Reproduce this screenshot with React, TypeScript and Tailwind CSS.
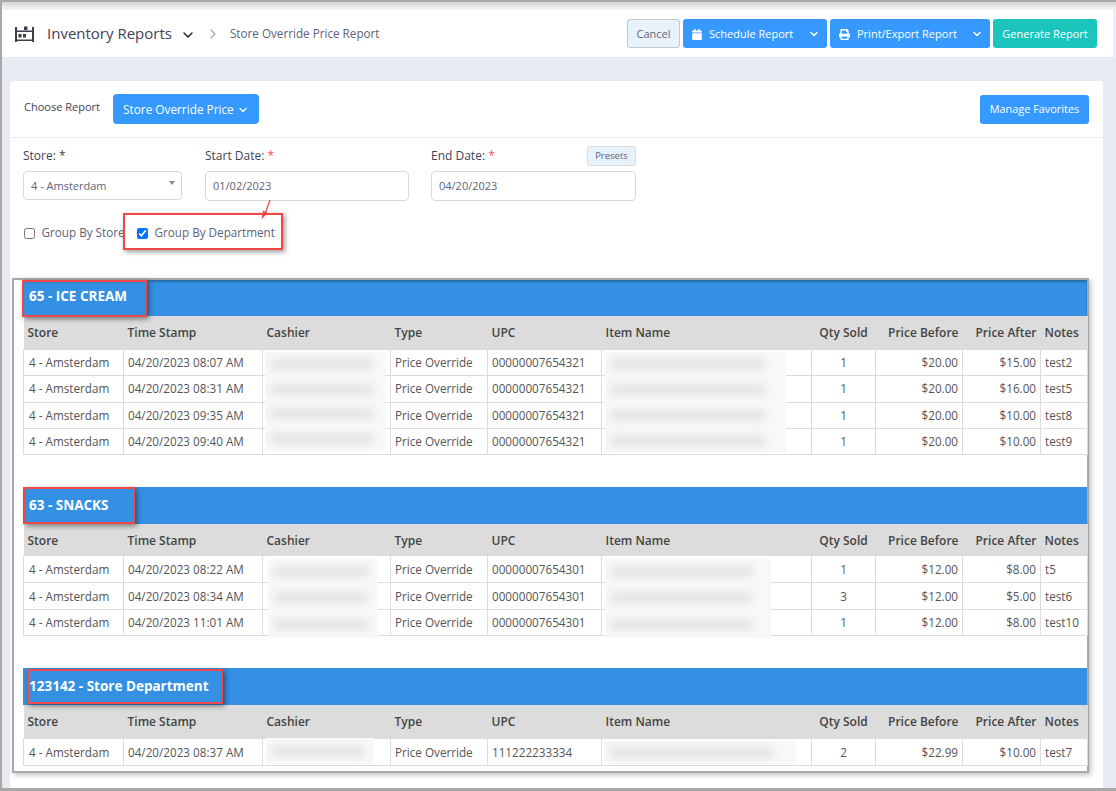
import { FaCalendar, FaPrint } from "react-icons/fa";
import { ChevronDown, ChevronRight } from "lucide-react";

type Row = {
  time: string;
  upc: string;
  qty: number;
  before: string;
  after: string;
  notes: string;
};

type Group = {
  title: string;
  rows: Row[];
  rowH: string[];
  mark: string;
  cashierPatch: string;
  itemPatch: string;
  gap: string;
  headH: string;
  headPt: string;
  blue: string;
  cellPt: string;
};

const COLS = [100, 139, 128, 97, 114, 210, 64, 87, 78, 47];

const GROUPS: Group[] = [
  {
    title: "65 - ICE CREAM",
    mark: "left-[-1px] top-0 h-[37px] w-[125px]",
    cashierPatch: "left-[242px] top-[72px] h-[99px] w-[120px]",
    itemPatch: "left-[582px] top-[72px] h-[101px] w-[181px]",
    gap: "",
    blue: "h-[36px] pb-[4px] shadow-[inset_0_2px_2px_rgba(0,0,0,0.25)]",
    headH: "h-[33px]",
    headPt: "pt-[2px]",
    cellPt: "pt-[1px]",
    rowH: ["h-[26px]", "h-[27px]", "h-[26px]", "h-[26px]"],
    rows: [
      { time: "04/20/2023 08:07 AM", upc: "00000007654321", qty: 1, before: "$20.00", after: "$15.00", notes: "test2" },
      { time: "04/20/2023 08:31 AM", upc: "00000007654321", qty: 1, before: "$20.00", after: "$16.00", notes: "test5" },
      { time: "04/20/2023 09:35 AM", upc: "00000007654321", qty: 1, before: "$20.00", after: "$10.00", notes: "test8" },
      { time: "04/20/2023 09:40 AM", upc: "00000007654321", qty: 1, before: "$20.00", after: "$10.00", notes: "test9" },
    ],
  },
  {
    title: "63 - SNACKS",
    mark: "left-[1px] top-0 h-[37px] w-[111px]",
    cashierPatch: "left-[245px] top-[72px] h-[79px] w-[110px]",
    itemPatch: "left-[582px] top-[72px] h-[79px] w-[166px]",
    gap: "mt-[32px]",
    blue: "h-[37px]",
    headH: "h-[32px]",
    headPt: "pt-[4px]",
    cellPt: "pt-[1px]",
    rowH: ["h-[27px]", "h-[27px]", "h-[26px]"],
    rows: [
      { time: "04/20/2023 08:22 AM", upc: "00000007654301", qty: 1, before: "$12.00", after: "$8.00", notes: "t5" },
      { time: "04/20/2023 08:34 AM", upc: "00000007654301", qty: 3, before: "$12.00", after: "$5.00", notes: "test6" },
      { time: "04/20/2023 11:01 AM", upc: "00000007654301", qty: 1, before: "$12.00", after: "$8.00", notes: "test10" },
    ],
  },
  {
    title: "123142 - Store Department",
    mark: "left-[4px] top-[1px] h-[35px] w-[196px]",
    cashierPatch: "left-[243px] top-[70px] h-[26px] w-[108px]",
    itemPatch: "left-[581px] top-[73px] h-[23px] w-[192px]",
    gap: "mt-[32px]",
    blue: "h-[37px]",
    headH: "h-[33px]",
    headPt: "pt-[2px]",
    cellPt: "pt-[2px]",
    rowH: ["h-[27px]"],
    rows: [
      { time: "04/20/2023 08:37 AM", upc: "111222233334", qty: 2, before: "$22.99", after: "$10.00", notes: "test7" },
    ],
  },
];

function Patch({ className, rows }: { className: string; rows: number }) {
  return (
    <div className={`absolute flex flex-col justify-around overflow-hidden bg-[#f8f8f8] ${className}`}>
      {Array.from({ length: rows }).map((_, i) => (
        <div key={i} className="ml-[6px] h-[9px] w-[85%] bg-[#e0e0e0] blur-[4px]" />
      ))}
    </div>
  );
}

function ReportGroup({ group }: { group: Group }) {
  const heads = ["Store", "Time Stamp", "Cashier", "Type", "UPC", "Item Name", "Qty Sold", "Price Before", "Price After", "Notes"];
  const td = `border border-[#dcdcdc] ${group.cellPt}`;
  return (
    <section className={`relative ${group.gap}`}>
      <div className={`flex items-center bg-[#3390e2] pl-[6px] text-[13.500px] font-bold text-white ${group.blue}`}>
        {group.title}
      </div>
      <table className="w-[1064px] table-fixed border-collapse text-[11.700px] text-[#555]">
        <colgroup>
          {COLS.map((w, i) => (
            <col key={i} style={{ width: w }} />
          ))}
        </colgroup>
        <thead>
          <tr className={`bg-[#dcdcdc] ${group.headH}`}>
            {heads.map((h, i) => (
              <th
                key={h}
                className={`whitespace-nowrap pl-[4px] pr-[4px] text-[12px] font-semibold text-[#444] ${group.headPt} ${
                  i === 6 ? "text-center" : i === 7 || i === 8 ? "text-right" : "text-left"
                }`}
              >
                {h}
              </th>
            ))}
          </tr>
        </thead>
        <tbody>
          {group.rows.map((r, i) => (
            <tr key={i} className={group.rowH[i]}>
              <td className={`${td} pl-[5px]`}>4 - Amsterdam</td>
              <td className={`${td} pl-[4px]`}>{r.time}</td>
              <td className={td} />
              <td className={`${td} pl-[4px]`}>Price Override</td>
              <td className={`${td} pl-[4px]`}>{r.upc}</td>
              <td className={td} />
              <td className={`${td} text-center`}>{r.qty}</td>
              <td className={`${td} pr-[4px] text-right`}>{r.before}</td>
              <td className={`${td} pr-[4px] text-right`}>{r.after}</td>
              <td className={`${td} pl-[4px]`}>{r.notes}</td>
            </tr>
          ))}
        </tbody>
      </table>
      <Patch className={group.cashierPatch} rows={group.rows.length} />
      <Patch className={group.itemPatch} rows={group.rows.length} />
      <div className={`absolute border-2 border-[#f04848] shadow-[2px_2px_5px_rgba(0,0,0,0.45)] ${group.mark}`} />
    </section>
  );
}

function WarehouseIcon() {
  return (
    <svg width="19" height="16" viewBox="0 0 19 16" fill="#3b3f4a">
      <path d="M0 1h2v15H0zM17 1h2v15h-2zM2 13.500h15V15H2zM2 4.500h15V6H2z" />
      <path d="M9 .5h3.500V4H9zM3.500 8h3v3.500h-3zM8 8h3v3.500H8z" />
    </svg>
  );
}

function Field({ label, value, className }: { label: string; value: string; className: string }) {
  return (
    <div className={className}>
      <div className="text-[12px] leading-[16px] text-[#3f4254]">
        {label} <span className="text-[#f64e60]">*</span>
      </div>
      <div className="mt-[7px] flex h-[30px] items-center rounded-[4px] border border-[#d8d8d8] bg-white pl-[7px] text-[11px] text-[#5e6278]">
        {value}
      </div>
    </div>
  );
}

export default function App() {
  return (
    <div className="relative h-[791px] w-[1116px] overflow-hidden bg-[#eef0f8] font-['Open_Sans',sans-serif]">
      <div className="flex h-[788px] flex-col border-l-[2px] border-t-[2px] border-[#a8a8a8]">
        <div className="h-[8px] bg-gradient-to-b from-[#d5d5d5] to-[#f6f6f6]" />
        <header className="mr-[3px] flex h-[47px] shrink-0 items-center bg-white pl-[13px] pr-[16px]">
          <WarehouseIcon />
          <span className="ml-[13px] text-[15px] text-[#3f4254]">Inventory Reports</span>
          <ChevronDown className="ml-[8px] mt-[2px] h-[16px] w-[16px] text-[#222]" strokeWidth={2.2} />
          <ChevronRight className="ml-[9px] h-[16px] w-[16px] text-[#a8abb8]" strokeWidth={2} />
          <span className="ml-[9px] text-[11.700px] text-[#5e6278]">Store Override Price Report</span>
          <div className="ml-auto flex items-center gap-[3px] text-[11px] text-white">
            <button className="flex h-[29px] w-[53px] items-center justify-center rounded-[3px] border border-[#c4c8ce] bg-[#e8f2fb] pt-[1px] text-[#5e6278]">
              Cancel
            </button>
            <div className="flex h-[29px] w-[144px] rounded-[3px] bg-[#3699ff]">
              <span className="flex flex-1 items-center pl-[9px] pt-[1px]">
                <FaCalendar className="mr-[7px] h-[11px] w-[10px]" />
                Schedule Report
              </span>
              <span className="flex w-[26px] items-center justify-center">
                <ChevronDown className="h-[12px] w-[12px]" strokeWidth={3} />
              </span>
            </div>
            <div className="flex h-[29px] w-[160px] rounded-[3px] bg-[#3699ff]">
              <span className="flex flex-1 items-center pl-[9px] pt-[1px]">
                <FaPrint className="mr-[7px] h-[11px] w-[11px]" />
                Print/Export Report
              </span>
              <span className="flex w-[26px] items-center justify-center">
                <ChevronDown className="h-[12px] w-[12px]" strokeWidth={3} />
              </span>
            </div>
            <button className="flex h-[29px] w-[104px] items-center justify-center rounded-[3px] bg-[#1bc5bd] pt-[1px]">
              Generate Report
            </button>
          </div>
        </header>
        <main className="flex-1 bg-[#e9ebf4] pl-[8px] pr-[13px] pt-[24px]">
          <div className="relative h-[707px] rounded-t-[3px] bg-white">
            <div className="flex h-[57px] items-center border-b border-[#ececec] pl-[14px] pr-[14px]">
              <span className="mb-[3px] text-[11px] text-[#3f4254]">Choose Report</span>
              <button className="ml-[13px] flex h-[30px] w-[146px] items-center justify-center rounded-[4px] bg-[#3699ff] pt-[1px] text-[11.800px] text-white">
                Store Override Price
                <ChevronDown className="ml-[3px] h-[12px] w-[12px]" strokeWidth={2.5} />
              </button>
              <button className="ml-auto h-[29px] w-[109px] rounded-[3px] bg-[#3699ff] pt-[1px] text-[10.900px] text-white">
                Manage Favorites
              </button>
            </div>
            <div className="relative flex pl-[13px] pt-[10px]">
              <div className="w-[159px]">
                <div className="text-[12px] leading-[16px] text-[#3f4254]">Store: *</div>
                <div className="relative mt-[7px] flex h-[29px] items-center rounded-[4px] border border-[#d8d8d8] pl-[7px] pt-[1px] text-[11px] text-[#5e6278]">
                  4 - Amsterdam
                  <span className="absolute right-[6px] top-[9px] h-0 w-0 border-x-[3px] border-t-[4px] border-x-transparent border-t-[#888]" />
                </div>
              </div>
              <Field className="ml-[23px] w-[204px]" label="Start Date:" value="01/02/2023" />
              <Field className="ml-[22px] w-[205px]" label="End Date:" value="04/20/2023" />
              <div className="absolute left-[577px] top-[8px] flex h-[20px] w-[49px] items-center justify-center rounded-[2px] border border-[#d5dde5] bg-[#e8f2fb] text-[9.500px] text-[#5e6278]">
                Presets
              </div>
            </div>
            <div className="ml-[13.500px] mt-[24px] flex h-[16px] items-center text-[11.700px] text-[#5e6278]">
              <input type="checkbox" readOnly className="h-[11px] w-[11px] accent-[#0075ff]" />
              <span className="ml-[7px] w-[88px] whitespace-nowrap">Group By Store</span>
              <input type="checkbox" readOnly checked className="ml-[7px] h-[11px] w-[11px] accent-[#0075ff]" />
              <span className="ml-[7px] whitespace-nowrap">Group By Department</span>
            </div>
            <div className="absolute left-[113px] top-[132px] h-[37px] w-[160px] border-2 border-[#f04848] shadow-[2px_2px_5px_rgba(0,0,0,0.4)]" />
            <svg className="absolute left-[250px] top-[118px]" width="16" height="24" viewBox="0 0 16 24">
              <path d="M10 1 L5 15" stroke="#f04848" strokeWidth="1.300" />
              <path d="M1.500 20 L3 11.500 L8 14 Z" fill="#f04848" />
            </svg>
            <div className="absolute left-[2px] top-[197px] h-[495px] w-[1077px] border-[2px] border-[#a8a8a8] pl-[9px] shadow-[2px_2px_5px_rgba(0,0,0,0.25)]">
              {GROUPS.map((g) => (
                <ReportGroup key={g.title} group={g} />
              ))}
            </div>
          </div>
        </main>
      </div>
      <div className="h-[3px] bg-[#a8a8a8]" />
    </div>
  );
}
